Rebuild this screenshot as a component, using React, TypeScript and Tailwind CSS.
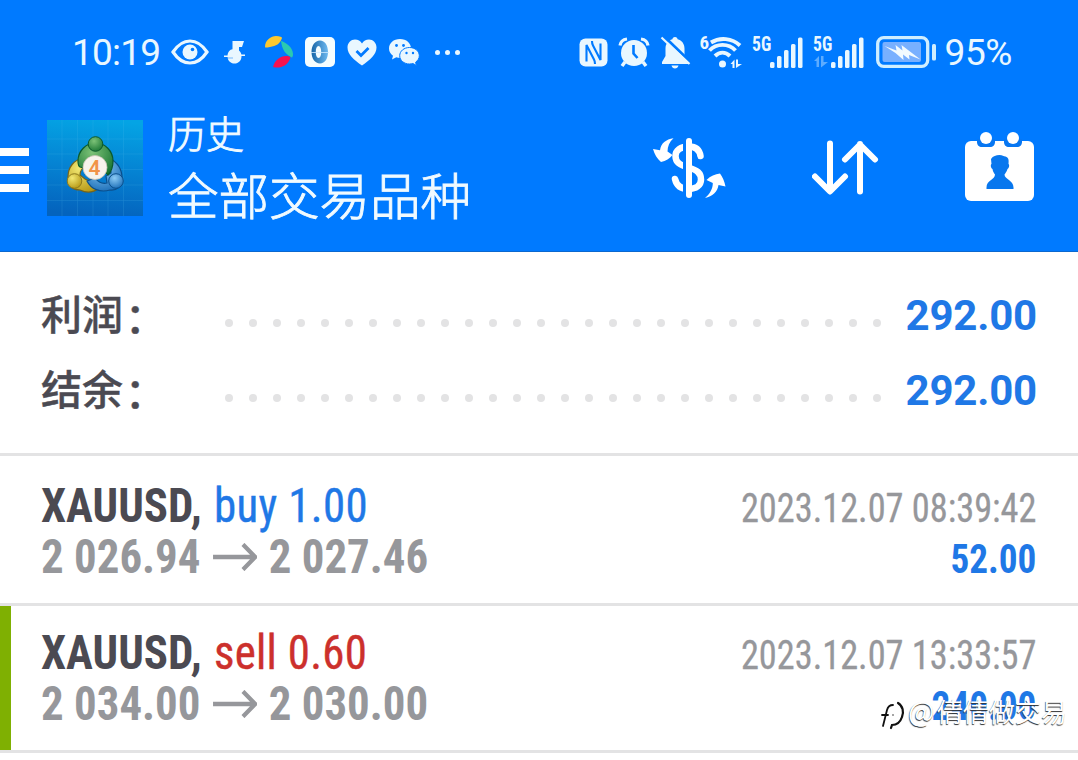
import React from 'react';

const roboto = "font-['Roboto','Noto_Sans_CJK_SC',sans-serif]";
const condensed = "font-['Roboto_Condensed','Roboto','Noto_Sans_CJK_SC',sans-serif] font-stretch-condensed";

type Deal = {
  symbol: string;
  side: 'buy' | 'sell';
  volume: string;
  open: string;
  close: string;
  time: string;
  profit: string;
  marked?: boolean;
};

const deals: Deal[] = [
  { symbol: 'XAUUSD', side: 'buy', volume: '1.00', open: '2 026.94', close: '2 027.46', time: '2023.12.07 08:39:42', profit: '52.00' },
  { symbol: 'XAUUSD', side: 'sell', volume: '0.60', open: '2 034.00', close: '2 030.00', time: '2023.12.07 13:33:57', profit: '240.00', marked: true },
];

const EyeIcon = () => (
  <svg width="38" height="26" viewBox="0 0 38 26" fill="none">
    <path d="M2 13C7 5.500 12.500 2 19 2s12 3.500 17 11c-5 7.500-10.500 11-17 11S7 20.500 2 13Z" stroke="#e9f7ff" strokeWidth="3.200" />
    <circle cx="19" cy="13" r="7.500" fill="#e9f7ff" />
    <circle cx="21.500" cy="10.500" r="1.800" fill="#007aff" />
  </svg>
);

const NoteIcon = () => (
  <svg width="22" height="24" viewBox="0 0 22 24" fill="#e9f7ff">
    <path d="M8.500 1H20l-2 6h-3v3.500c1.800 1.300 2.500 3.500 2.500 5.700 0 4.300-3 7.300-7 7.300s-7-3-7-7.300c0-4 2.500-6.700 5-6.900V7Z" />
    <path d="M0 15.500h5v1.500H0zM16 14.500h5V16h-5z" />
    <path d="M1 18h8" stroke="#007aff" strokeWidth=".5" />
  </svg>
);

const PetalsIcon = () => (
  <svg width="30" height="34" viewBox="0 0 30 34">
    <path d="M1 12C1 5 7 1 12 1c4 0 6 1 6 2-2 6-6 8-12 9-3 .5-5 1-5 0Z" fill="#fdc82f" />
    <path d="M17 6c4 1 12 6 12 13 0 3-1 4-2 3-6-3-9-8-10-16Z" fill="#2bcab0" />
    <path d="M9 32c2-7 7-11 13-11 4 0 5 1 4 3-3 7-10 10-17 8Z" fill="#f5124f" />
  </svg>
);

const RingAppIcon = () => (
  <svg width="30" height="30" viewBox="0 0 30 30">
    <defs>
      <linearGradient id="ring" x1="0" x2="1">
        <stop offset="0" stopColor="#1767a8" />
        <stop offset="1" stopColor="#6db9f0" />
      </linearGradient>
    </defs>
    <rect width="30" height="30" rx="5" fill="#f4fdff" />
    <path fillRule="evenodd" d="M15 3.500c5 0 8 5 8 11.500S20 26.500 15 26.500 6.500 21.500 6.500 15 10 3.500 15 3.500ZM13.500 9c-1.800 0-2.700 2.500-2.700 6s.9 6 2.700 6 2.700-2.500 2.700-6-.9-6-2.700-6Z" fill="url(#ring)" />
    <path d="M6 15.500h18" stroke="#cfeaff" strokeWidth=".8" />
  </svg>
);

const HeartIcon = () => (
  <svg width="30" height="27" viewBox="0 0 30 27">
    <path d="M15 26.500C7 21 .5 15.500.5 8.500.5 4 4 .5 8 .5c3 0 5.500 1.500 7 4 1.500-2.500 4-4 7-4 4 0 7.500 3.500 7.500 8C29.500 15.500 23 21 15 26.500Z" fill="#e9f7ff" />
    <path d="m9.500 12 4.500 4.500 7.500-7.500" fill="none" stroke="#007aff" strokeWidth="2.800" />
  </svg>
);

const WechatIcon = () => (
  <svg width="32" height="28" viewBox="0 0 32 28">
    <path d="M12 1C5.500 1 1 5.200 1 10.500c0 3 1.500 5.500 4 7.300L4 21.500l4.300-2.200c1.200.4 2.500.5 3.700.5 6.500 0 11-4 11-9.300S18.500 1 12 1Z" fill="#e9f7ff" />
    <path d="M21.500 9.500c-5.500 0-9.800 3.600-9.800 8.200s4.300 8.300 9.800 8.300c1.200 0 2.400-.2 3.400-.5l3.500 1.900-.8-3.200c2.200-1.600 3.700-3.800 3.700-6.500 0-4.600-4.300-8.200-9.800-8.200Z" fill="#e9f7ff" stroke="#007aff" strokeWidth="1" />
    <g fill="#007aff">
      <circle cx="8.500" cy="7.500" r="1.400" />
      <circle cx="15.500" cy="7.500" r="1.400" />
      <circle cx="18.500" cy="15" r="1.200" />
      <circle cx="25" cy="15" r="1.200" />
    </g>
  </svg>
);

const NfcIcon = () => (
  <svg width="29" height="29" viewBox="0 0 29 29">
    <rect x=".5" y=".5" width="28" height="28" rx="6" fill="#e9f7ff" />
    <path d="M7.500 23.500V7l7.500 14.500c.8 1.500 1 2.500 1 4.500M21.500 5.500V22L14 7.500c-.8-1.500-1-2.500-1-4.500" fill="none" stroke="#007aff" strokeWidth="2.100" />
  </svg>
);

const AlarmIcon = () => (
  <svg width="32" height="31" viewBox="0 0 32 31">
    <path d="M2 8.500C2.500 5 5 2.500 9 2M30 8.500C29.500 5 27 2.500 23 2" stroke="#e9f7ff" strokeWidth="3.200" fill="none" />
    <path d="m7 25-3 4M25 25l3 4" stroke="#e9f7ff" strokeWidth="3.500" />
    <circle cx="16" cy="16" r="13" fill="#e9f7ff" />
    <path d="M15.500 8v8.500l4 4.500" fill="none" stroke="#007aff" strokeWidth="2.600" />
  </svg>
);

const MutedBellIcon = () => (
  <svg width="31" height="33" viewBox="0 0 31 33">
    <path d="M15 1c1.700 0 2.500 1 2.600 2.300C22 4.500 24.500 8 24.500 12.500V20l3.500 6v2H2v-2l3.500-6v-7.500C5.500 8 8 4.500 12.400 3.300 12.500 2 13.300 1 15 1ZM11.500 29.500h7c-.5 2-1.800 3-3.500 3s-3-1-3.500-3Z" fill="#e9f7ff" />
    <path d="M3.500 0 31 26.500" stroke="#007aff" strokeWidth="3" />
    <path d="M1.500 1.500 29.500 28" stroke="#e9f7ff" strokeWidth="2.200" />
  </svg>
);

const WifiIcon = () => (
  <svg width="36" height="33" viewBox="0 0 36 33">
    <g fill="none" stroke="#e9f7ff" strokeWidth="3.900">
      <path d="M4 6.500c9-5.500 21-4.500 29 3" />
      <path d="M2.500 14.500c7-7.500 19-7.500 26 0" />
      <path d="M8 20c4.500-4.500 10.500-4.500 15 0" />
    </g>
    <circle cx="15.500" cy="28" r="3.500" fill="#e9f7ff" />
    <path d="m23.500 28 4-4.500V32h-2v-4ZM29 23.500h2v4.500h4L29 32Z" fill="#e9f7ff" />
  </svg>
);

const SignalBars: React.FC<{ idle?: boolean }> = ({ idle }) => (
  <div className="relative h-[34px] w-[51px]">
    <span className={`absolute left-0 top-0 text-[20px] leading-[18px] font-bold origin-left scale-x-[0.88] text-[#e9f7ff] ${condensed}`}>5G</span>
    <svg className="absolute right-0 bottom-0" width="51" height="33" viewBox="0 0 51 33" fill="#e9f7ff">
      {idle && <path d="m1 25 5-5v11H3.500v-6ZM8 20h2.500v6H15l-7 5.500Z" opacity=".4" />}
      <rect x="18" y="26" width="4.500" height="6" rx="1.500" />
      <rect x="25" y="20" width="4.500" height="12" rx="1.500" />
      <rect x="32" y="14" width="4.500" height="18" rx="1.500" />
      <rect x="39" y="8" width="4.500" height="24" rx="1.500" />
      <rect x="46" y="1.500" width="4.500" height="30.500" rx="1.500" />
    </svg>
  </div>
);

const BatteryIcon = () => (
  <svg width="61" height="32" viewBox="0 0 61 32">
    <rect x="1.700" y="1.700" width="50" height="28.600" rx="6" fill="none" stroke="#cfeeff" strokeWidth="3.300" />
    <rect x="6.500" y="6" width="38.500" height="20" rx="2" fill="#78b0ff" />
    <path d="M8.500 10 20.500 14.500 19.500 9l7 5.500L25.500 9l6.500 5 12.500 9.500L33 19l.5 4.500-6.500-5 .5 5.500-8-7Z" fill="#f2fbff" />
    <rect x="56" y="8" width="4" height="16.500" rx="1.500" fill="#cfeeff" />
  </svg>
);

const AppLogo = () => (
  <svg width="96" height="96" viewBox="0 0 96 96">
    <defs>
      <linearGradient id="sky" x1="0.600" y1="0" x2="0.500" y2="1">
        <stop offset="0" stopColor="#04a4e4" />
        <stop offset=".5" stopColor="#0583d3" />
        <stop offset="1" stopColor="#0463bd" />
      </linearGradient>
      <radialGradient id="green" cx=".4" cy=".3" r=".8">
        <stop offset="0" stopColor="#7cc277" />
        <stop offset="1" stopColor="#14712f" />
      </radialGradient>
      <radialGradient id="yellow" cx=".35" cy=".3" r=".8">
        <stop offset="0" stopColor="#f2e873" />
        <stop offset="1" stopColor="#b39410" />
      </radialGradient>
      <radialGradient id="blue" cx=".4" cy=".3" r=".8">
        <stop offset="0" stopColor="#8ccbf5" />
        <stop offset="1" stopColor="#1468b4" />
      </radialGradient>
    </defs>
    <rect width="96" height="96" fill="url(#sky)" />
    <path d="M15 0v96M30.500 0v96M46 0v96M61 0v96M76.500 0v96M0 19h96M0 34h96M0 49.500h96M0 65h96M0 80.500h96" stroke="#5fc4ee" strokeWidth=".6" opacity=".25" />
    <g strokeWidth="1.200">
      <path d="M21 57c0-10 6-17 15-19l3 8c-4 2-6 5-6 9l5 4c5 2 10 5 14 9-6 5-13 5-19 2-8 0-12-5-12-13Z" fill="url(#yellow)" stroke="#76641a" />
      <path d="M62 38c8 4 13 11 13 20 0 8-5 13-12 12-10 3-19-1-23-9l8-3c4 5 8 6 12 5l-1-7 5-3c0-4-2-6-5-8Z" fill="url(#blue)" stroke="#0b4f8c" />
      <path d="M31 41c0-10 8-18 17.500-18S66 31 66 41c0 6-2 11-5 14l-6-6c2-4 1-10-2-12l-5 3-5-3c-3 3-4 8-2 12l-8-2c-2-1-2-3-2-6Z" fill="url(#green)" stroke="#0b5a2b" />
    </g>
    <circle cx="48.500" cy="24" r="7.300" fill="url(#green)" stroke="#0b5a2b" />
    <circle cx="27.500" cy="61" r="7.300" fill="url(#yellow)" stroke="#8d7a1c" />
    <circle cx="69" cy="61" r="7.300" fill="url(#blue)" stroke="#0b4f8c" />
    <circle cx="48" cy="47.500" r="12" fill="#f7f3ec" stroke="#c9c4b5" strokeWidth=".8" />
    <text x="47.500" y="55" textAnchor="middle" fontFamily="Roboto" fontSize="21" fontWeight="600" fill="#f19348">4</text>
  </svg>
);

const CurrencyIcon = () => (
  <svg width="74" height="62" viewBox="0 0 74 62">
    <path d="M48.500 19c-1-6-5-9.500-11.500-9.500-8.500 0-13.500 4-13.500 9.500 0 6.500 4.500 9 13 11.500 8.500 2.500 12.500 5.500 12.500 12 0 6-5 9.500-12.500 9.500-7 0-12-3.500-13.500-10" fill="none" stroke="white" strokeWidth="6.500" strokeLinecap="round" />
    <path d="M33 3v56" stroke="#007aff" strokeWidth="4" />
    <path d="M37 4v54" stroke="white" strokeWidth="6" strokeLinecap="round" />
    <path d="M21.500 1.300C14 2.500 9 6 8 13.300L1 12c1.500 5.500 4 9.500 8 13 5-1 8.500-3.500 11.500-7l-5-3.500c0-5 2-10 6-13.200Z" fill="white" />
    <path d="M53 61c7.500-1.500 12.500-6 13.500-13l7 1.500c-1-5.500-3-9.500-5.500-13-5 .5-9.500 2.500-13.500 6.500l6.300 3C61 51.500 57.500 57.500 53 61Z" fill="white" />
  </svg>
);

const SortIcon = () => (
  <svg width="67" height="56" viewBox="0 0 67 56" fill="none" stroke="white" strokeWidth="6" strokeLinecap="round" strokeLinejoin="round">
    <path d="M18 3.500V51M3 36.500l15 15 15-15M48 51.500V4M33 19.500l15-15 15 15" />
  </svg>
);

const CalendarIcon = () => (
  <svg width="69" height="70" viewBox="0 0 69 70">
    <rect y="9" width="69" height="60" rx="6" fill="white" />
    <path d="M12 7h18v3c0 3-2 5-5 5h-8c-3 0-5-2-5-5ZM39 7h18v3c0 3-2 5-5 5h-8c-3 0-5-2-5-5Z" fill="#0877f2" />
    <circle cx="21" cy="6" r="6" fill="white" />
    <circle cx="48" cy="6" r="6" fill="white" />
    <path d="M26 27c2-3 5-4 8.500-4 3 0 4 1.500 6 1.500 3 1 3.500 3 3 7.500 1 0 1 4-1 5-1 3-2 4-3 5.500 0 5 9 5.500 9 13V57h-27v-1.500c0-7.500 8.500-7.500 8.500-13-1-1.500-2-2.500-2.500-5.500-2-1-2-5-1-5Z" fill="#0877ee" />
  </svg>
);

const StatusBar = () => (
  <div className="flex h-[104px] items-center justify-between pl-[72px] pr-[66px] text-[#e9f7ff]">
    <div className="flex items-center">
      <span className={`mt-[2px] w-[99px] text-[37px] leading-[40px] tracking-[-0.8px] ${roboto}`}>10:19</span>
      <EyeIcon />
      <div className="ml-[15px]"><NoteIcon /></div>
      <div className="ml-[18px]"><PetalsIcon /></div>
      <div className="ml-[11px]"><RingAppIcon /></div>
      <div className="ml-[12px]"><HeartIcon /></div>
      <div className="ml-[11px]"><WechatIcon /></div>
      <div className="ml-[15px] flex gap-[5px]">
        <span className="size-[5px] rounded-full bg-[#e9f7ff]" />
        <span className="size-[5px] rounded-full bg-[#e9f7ff]" />
        <span className="size-[5px] rounded-full bg-[#e9f7ff]" />
      </div>
    </div>
    <div className="flex items-center">
      <NfcIcon />
      <div className="ml-[10px]"><AlarmIcon /></div>
      <div className="ml-[10px]"><MutedBellIcon /></div>
      <span className={`ml-[9px] mb-[19px] w-[7px] text-[19px] leading-[18px] font-bold ${condensed}`}>6</span>
      <WifiIcon />
      <div className="ml-[9px]"><SignalBars /></div>
      <div className="ml-[10px]"><SignalBars idle /></div>
      <div className="ml-[12px]"><BatteryIcon /></div>
      <span className={`mt-[2px] ml-[8px] text-[37px] leading-[40px] tracking-[-0.4px] ${roboto}`}>95%</span>
    </div>
  </div>
);

const Toolbar = () => (
  <div className="flex h-[147px]">
    <div className="mt-[44px] flex w-[29px] flex-col gap-[10px]">
      <span className="h-[8px] bg-white" />
      <span className="h-[8px] bg-white" />
      <span className="h-[8px] bg-white" />
    </div>
    <div className="ml-[18px] mt-[16px]"><AppLogo /></div>
    <div className="ml-[25px] mt-[3px] flex-1 font-light text-[#f0faff] [-webkit-text-stroke:0.9px_#f0faff] font-['Noto_Sans_CJK_SC',sans-serif]">
      <div className="text-[38px] leading-[50px]">历史</div>
      <div className="text-[50.500px] leading-[72px]">全部交易品种</div>
    </div>
    <div className="mt-[33px] mr-[86px]"><CurrencyIcon /></div>
    <div className="mt-[36px] mr-[86px]"><SortIcon /></div>
    <div className="mt-[28px] mr-[44px]"><CalendarIcon /></div>
  </div>
);

const SummaryRow: React.FC<{ label: string; value: string }> = ({ label, value }) => (
  <div className="flex h-[75px] items-center pr-[41px] pl-[41px]">
    <span className="mb-[8px] w-[184px] text-[41px] leading-[60px] font-medium text-[#4b4a52] [-webkit-text-stroke:0.4px_#4b4a52] font-['Noto_Sans_CJK_SC',sans-serif]">
      {label}
      <span className="relative left-[2px] top-[3px]">：</span>
    </span>
    <div className="mt-[14px] flex w-[656px] justify-between">
      {Array.from({ length: 28 }, (_, i) => (
        <span key={i} className="size-[8px] rounded-full bg-[#e3e3e4]" />
      ))}
    </div>
    <span className={`flex-1 text-right text-[42px] leading-[50px] font-bold tracking-[-0.200px] text-[#1f78e6] ${roboto}`}>{value}</span>
  </div>
);

const DealRow: React.FC<{ deal: Deal }> = ({ deal }) => (
  <div className={`flex justify-between border-b-[3px] border-[#e3e3e4] pr-[42px] whitespace-nowrap ${condensed} ${deal.marked ? 'h-[147px]' : 'h-[150px] pt-[3px] pl-[41px]'}`}>
    {deal.marked && <span className="mr-[30px] w-[11px] bg-[#7fb002]" />}
    <div className="flex-1 origin-left scale-x-[0.935] pt-[21px] text-[48px] leading-[51px]">
      <div>
        <span className="font-bold text-[#4b4a52]">{deal.symbol}, </span>
        <span className={deal.side === 'buy' ? 'ml-[2px] tracking-[0.4px] text-[#1f78e6] [-webkit-text-stroke:0.4px_#1f78e6]' : 'ml-[2px] tracking-[0.3px] text-[#cc302c] [-webkit-text-stroke:0.4px_#cc302c]'}>{deal.side} {deal.volume}</span>
      </div>
      <div className="flex items-center font-bold text-[#96979b]">
        <span>{deal.open}</span>
        <svg className="mx-[13px]" width="47" height="28" viewBox="0 0 47 28" fill="none" stroke="#96979b" strokeWidth="4.500">
          <path d="M0 14h45M32 1.500 45 14 32 26.500" />
        </svg>
        <span>{deal.close}</span>
      </div>
    </div>
    <div className="pt-[24px] text-right text-[40px] leading-[51px]">
      <div className="origin-right scale-x-[0.908] text-[#96979b] [-webkit-text-stroke:0.3px_#96979b]">{deal.time}</div>
      <div className="origin-right scale-x-[0.93] font-bold text-[#1f78e6]">{deal.profit}</div>
    </div>
  </div>
);

const Watermark = () => (
  <div className="absolute top-[695px] left-[880px] flex items-center whitespace-nowrap text-white font-['Noto_Sans_CJK_SC',sans-serif]">
    <svg width="26" height="36" viewBox="0 0 26 36" fill="none" strokeLinecap="round">
      <path d="M3 31 7 15c1-4 3-5 6-5M2 20h6" stroke="#111" strokeWidth="1.800" />
      <path d="M18 8c5 3 6 9 4 14-2 6-6 8-10 8l-1 3" stroke="#111" strokeWidth="2.200" />
      <circle cx="13" cy="20" r=".8" fill="#333" />
    </svg>
    <div className="-mt-[5px] ml-[2px] flex items-center leading-[36px] [text-shadow:-0.6px_0.6px_0.8px_#333]">
      <span className="mb-[2px] w-[29px] text-[28px]">@</span>
      <span className="text-[26px]">倩倩做交易</span>
    </div>
  </div>
);

export default function App() {
  return (
    <div className="relative h-[760px] w-[1078px] overflow-hidden bg-white">
      <header className="h-[252px] border-b border-[#0b68cf] bg-[#007aff]">
        <StatusBar />
        <Toolbar />
      </header>
      <section className="h-[204px] border-b-[3px] border-[#e3e3e4] pt-[26px]">
        <SummaryRow label="利润" value="292.00" />
        <SummaryRow label="结余" value="292.00" />
      </section>
      {deals.map((deal) => (
        <DealRow key={deal.time} deal={deal} />
      ))}
      <Watermark />
    </div>
  );
}
